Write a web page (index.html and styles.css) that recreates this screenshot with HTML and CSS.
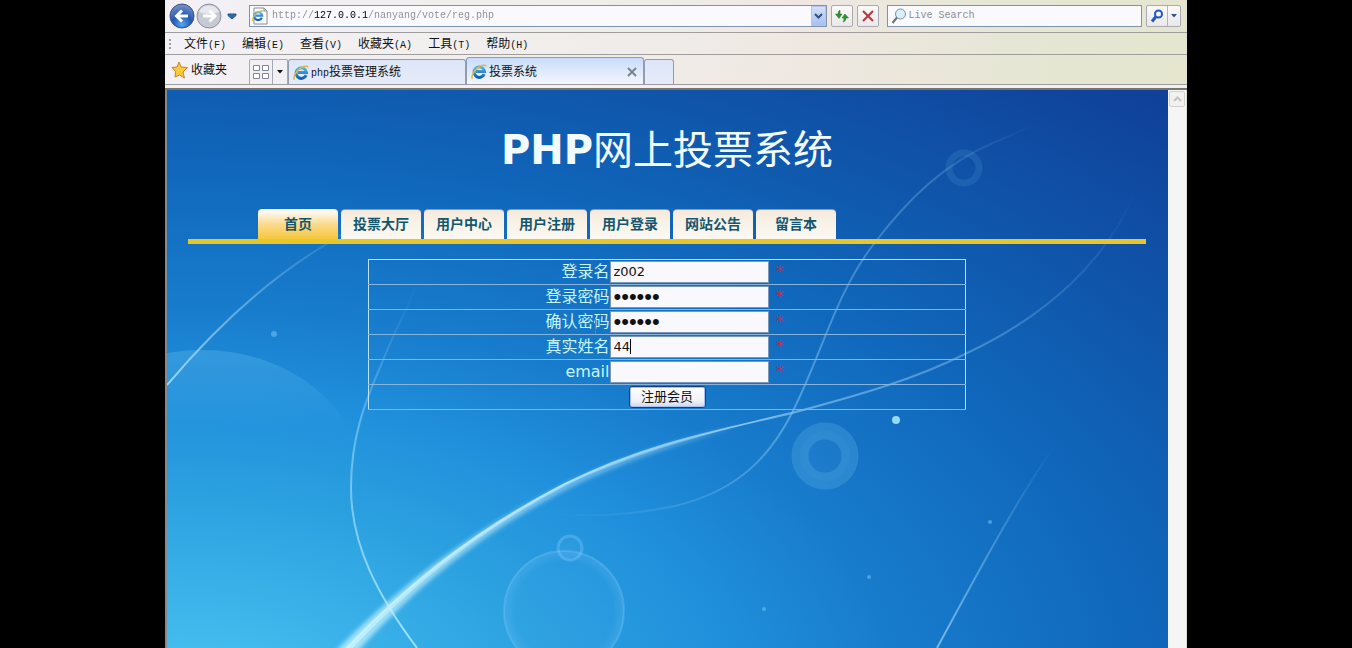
FILE: index.html
```html
<!DOCTYPE html>
<html lang="zh-CN">
<head>
<meta charset="utf-8">
<title>投票系统</title>
<link rel="stylesheet" href="styles.css">
</head>
<body>
<svg class="defs" aria-hidden="true">
  <defs>
    <linearGradient id="ieBlue" x1="0" y1="0" x2="0" y2="1"><stop offset="0" stop-color="#54b4ec"/><stop offset="1" stop-color="#1260b4"/></linearGradient>
    <symbol id="ie" viewBox="0 0 16 16">
      <path d="M13.2 10.2A5.3 5.3 0 1 1 13.6 7.6H5" fill="none" stroke="url(#ieBlue)" stroke-width="3"/>
      <path d="M1.5 14.8C-.5 12 3.500 5.500 8 3C11 1 15 .3 15 2.600" fill="none" stroke="#e2b83c" stroke-width="1.500"/>
    </symbol>
    <symbol id="down" viewBox="0 0 6 4"><path d="M0 0h6L3 3.500z" fill="currentColor"/></symbol>
  </defs>
</svg>
<div class="browser">
  <header class="chrome">
    <div class="row address-row">
      <div class="history">
        <button class="bare" aria-label="后退"><svg width="26" height="28" viewBox="0 0 26 28">
          <defs><radialGradient id="back" cx=".5" cy=".85" r=".8"><stop offset="0" stop-color="#55a8ec"/><stop offset=".5" stop-color="#2358b4"/><stop offset="1" stop-color="#7490c8"/></radialGradient></defs>
          <circle cx="13" cy="14" r="12" fill="url(#back)" stroke="#3c4c78"/><path d="M19 14H8M13 8.500L7.500 14l5.500 5.500" fill="none" stroke="#fff" stroke-width="3"/></svg></button>
        <button class="bare" aria-label="前进"><svg width="28" height="28" viewBox="0 0 28 28">
          <circle cx="14" cy="14" r="12" fill="#c6cad4" stroke="#8c909c"/><path d="M4 10A11 11 0 0 1 24 10Q14 14 4 10" fill="#e6e8ee"/><path d="M8 14H19M14.500 8.500L20 14l-5.500 5.500" fill="none" stroke="#fff" stroke-width="3"/></svg></button>
        <button class="bare recent" aria-label="最近的页面"><svg width="10" height="7" viewBox="0 0 10 7"><path d="M1 1h8v1.500L5 6 1 2.500z" fill="#2c6cae" stroke="#24507e"/></svg></button>
      </div>
      <div class="field url">
        <svg width="17" height="18" viewBox="0 0 17 18"><path d="M2 1h10l3 3v13H2z" fill="#fff" stroke="#868a94"/><path d="M12 1v3h3" fill="none" stroke="#868a94"/><use href="#ie" x="0" y="3" width="12" height="12"/></svg>
        <input type="text" aria-label="地址" value="http://127.0.0.1/nanyang/vote/reg.php">
        <button class="drop" aria-label="显示地址"><svg width="9" height="7" viewBox="0 0 9 7"><path d="M1 1l3.500 3.500L8 1" fill="none" stroke="#2f4f86" stroke-width="2"/></svg></button>
      </div>
      <button class="tool" aria-label="刷新"><svg width="16" height="16" viewBox="0 0 16 16"><path d="M6 2Q4 3 4 6H1.500L5 10.500 8 6H6zM11 6l3.500 4H12q0 3-3 4 1-1 1-4H8z" fill="#2c962c" stroke="#24742c" stroke-width=".5"/></svg></button>
      <button class="tool" aria-label="停止"><svg width="14" height="14" viewBox="0 0 14 14"><path d="M2 2l10 10M12 2L2 12" stroke="#b63440" stroke-width="2"/></svg></button>
      <div class="field search">
        <svg width="16" height="18" viewBox="0 0 16 18"><circle cx="9.500" cy="7" r="5" fill="#d8f0fa" stroke="#7c90a4"/><path d="M6 10.500L1.500 16" stroke="#6c7078" stroke-width="2"/></svg>
        <input type="text" aria-label="搜索" placeholder="Live Search">
      </div>
      <div class="split">
        <button aria-label="搜索"><svg width="14" height="14" viewBox="0 0 14 14"><circle cx="8.500" cy="5" r="3.500" fill="none" stroke="#2458c4" stroke-width="2"/><path d="M6 7.500L2 12.500" stroke="#2458c4" stroke-width="3"/></svg></button>
        <button class="arrow" aria-label="搜索选项"><svg width="6" height="4"><use href="#down"/></svg></button>
      </div>
    </div>
    <nav class="row menu-row" aria-label="菜单">
      <svg class="grip" width="3" height="14" viewBox="0 0 3 14"><path d="M1 1v2M1 5v2M1 9v2" stroke="#a0a0a0" stroke-width="2"/></svg>
      <button class="bare">文件<span class="key">(F)</span></button>
      <button class="bare">编辑<span class="key">(E)</span></button>
      <button class="bare">查看<span class="key">(V)</span></button>
      <button class="bare">收藏夹<span class="key">(A)</span></button>
      <button class="bare">工具<span class="key">(T)</span></button>
      <button class="bare">帮助<span class="key">(H)</span></button>
    </nav>
    <div class="row tab-row">
      <button class="bare favorites"><svg width="18" height="18" viewBox="0 0 18 18"><path d="M8 1l2.200 5 6.300.5-4.500 4.500 1.500 6L8.500 14 4 16l.5-5.500L1 6.500l5-.5z" fill="#fcc83c" stroke="#c4842c"/></svg>收藏夹</button>
      <div class="quick">
        <button class="grid" aria-label="快速导航选项卡"><svg width="16" height="14" viewBox="0 0 16 14"><path d="M.5.5h6v5h-6zM9.500.5h6v5h-6zM.5 8.500h6v5h-6zM9.500 8.500h6v5h-6z" fill="#fff" stroke="#7c8698"/></svg></button>
        <button class="arrow" aria-label="选项卡列表"><svg width="6" height="4"><use href="#down"/></svg></button>
      </div>
      <div class="tab"><svg width="16" height="16"><use href="#ie"/></svg><span><span class="key">php</span>投票管理系统</span></div>
      <div class="tab current"><svg width="16" height="16"><use href="#ie"/></svg><span>投票系统</span><button class="bare close" aria-label="关闭选项卡"><svg width="10" height="10" viewBox="0 0 10 10"><path d="M1 1l8 8M9 1L1 9" stroke="#7c828e" stroke-width="2"/></svg></button></div>
      <button class="tab new" aria-label="新选项卡"></button>
    </div>
  </header>
  <div class="viewport">
    <main class="page">
      <svg class="wallpaper" viewBox="0 0 1001 558" preserveAspectRatio="xMidYMid slice" aria-hidden="true">
        <defs>
          <radialGradient id="sky" gradientUnits="userSpaceOnUse" cx="0" cy="0" r="1.500" gradientTransform="translate(10 620) scale(1001 560)">
            <stop offset="0" stop-color="#4cc6f2"/><stop offset=".13" stop-color="#3cb4ea"/><stop offset=".26" stop-color="#2ba0e0"/><stop offset=".37" stop-color="#2090dc"/><stop offset=".48" stop-color="#187ccc"/><stop offset=".64" stop-color="#1068bc"/><stop offset=".8" stop-color="#0f55aa"/><stop offset="1" stop-color="#103e97"/>
          </radialGradient>
          <linearGradient id="beam" gradientUnits="userSpaceOnUse" x1="180" y1="558" x2="968" y2="102"><stop offset="0" stop-color="#d4f6ff" stop-opacity=".95"/><stop offset=".45" stop-color="#a0d8f8" stop-opacity=".7"/><stop offset=".75" stop-color="#80b8e8" stop-opacity=".5"/><stop offset="1" stop-color="#80b8e8" stop-opacity="0"/></linearGradient>
          <linearGradient id="glow" gradientUnits="userSpaceOnUse" x1="180" y1="558" x2="640" y2="318"><stop offset="0" stop-color="#c8f4ff" stop-opacity=".75"/><stop offset="1" stop-color="#a0d8f8" stop-opacity=".4"/></linearGradient>
          <linearGradient id="arc" gradientUnits="userSpaceOnUse" x1="0" y1="295" x2="220" y2="114"><stop offset="0" stop-color="#b0e4ff" stop-opacity=".8"/><stop offset="1" stop-color="#80b8e8" stop-opacity="0"/></linearGradient>
          <linearGradient id="rise" gradientUnits="userSpaceOnUse" x1="0" y1="558" x2="0" y2="190"><stop offset="0" stop-color="#b0ecff" stop-opacity=".85"/><stop offset=".6" stop-color="#a0dcff" stop-opacity=".5"/><stop offset="1" stop-color="#80b8e8" stop-opacity="0"/></linearGradient>
          <linearGradient id="ray" gradientUnits="userSpaceOnUse" x1="770" y1="558" x2="888" y2="355"><stop offset="0" stop-color="#90ccf4" stop-opacity=".8"/><stop offset="1" stop-color="#80b8e8" stop-opacity="0"/></linearGradient>
          <linearGradient id="swirl" gradientUnits="userSpaceOnUse" x1="380" y1="425" x2="868" y2="34"><stop offset="0" stop-color="#90ccf8" stop-opacity="0"/><stop offset=".4" stop-color="#90ccf8" stop-opacity=".5"/><stop offset=".8" stop-color="#80b8e8" stop-opacity=".35"/><stop offset="1" stop-color="#80b8e8" stop-opacity="0"/></linearGradient>
          <linearGradient id="haze" x1="0" y1="0" x2="0" y2="1"><stop offset="0" stop-color="#70c4f0" stop-opacity=".3"/><stop offset=".3" stop-color="#70c4f0" stop-opacity="0"/></linearGradient>
          <radialGradient id="bubble"><stop offset=".82" stop-color="#90d0ff" stop-opacity=".03"/><stop offset="1" stop-color="#90d0ff" stop-opacity=".2"/></radialGradient>
          <filter id="soft" x="-10%" y="-10%" width="120%" height="120%"><feGaussianBlur stdDeviation="2"/></filter>
        </defs>
        <rect width="1001" height="558" fill="url(#sky)"/>
        <ellipse cx="35" cy="390" rx="160" ry="130" fill="url(#haze)"/>
        <path d="M0 295Q78 203 158 155Q205 125 251 94" fill="none" stroke="url(#arc)" stroke-width="2"/>
        <path d="M248 198C238 224 226 244 215 273C196 316 184 350 184 398C184 455 211 506 250 558" fill="none" stroke="url(#rise)" stroke-width="2"/>
        <path d="M176 562C240 494 310 440 398 394C480 353 550 341 625 323C700 303 750 288 798 264C880 226 940 170 968 102" fill="none" stroke="url(#beam)" stroke-width="2"/>
        <path d="M168 562C240 488 310 438 398 394C460 364 520 348 570 336C520 352 460 369 400 399C310 446 250 496 190 562z" fill="url(#glow)" filter="url(#soft)"/>
        <path d="M176 562C240 492 310 438 398 393C480 354 550 341 640 318C550 343 480 357 400 395C310 442 245 495 182 562z" fill="url(#glow)"/>
        <path d="M381 423Q440 430 508 416C575 400 605 362 625 323C655 264 668 205 706 155C742 107 780 72 828 52Q850 43 868 34" fill="none" stroke="url(#swirl)" stroke-width="2"/>
        <path d="M888 355C850 410 820 466 770 558" fill="none" stroke="url(#ray)" stroke-width="2"/>
        <circle cx="397" cy="521" r="60" fill="url(#bubble)" stroke="#80c8f8" stroke-opacity=".3" stroke-width="2"/>
        <circle cx="403" cy="458" r="12" fill="#90d0ff" fill-opacity=".08" stroke="#90d0ff" stroke-opacity=".3" stroke-width="3"/>
        <circle cx="658" cy="366" r="25" fill="#60b8e8" fill-opacity=".08" stroke="#60b8e8" stroke-opacity=".28" stroke-width="17"/>
        <circle cx="797" cy="78" r="15" fill="none" stroke="#50a0d8" stroke-opacity=".2" stroke-width="7"/>
        <circle cx="729" cy="330" r="4" fill="#a4e4ff" opacity=".9"/>
        <g fill="#80c8f8" opacity=".5"><circle cx="107" cy="244" r="3"/><circle cx="823" cy="432" r="2"/><circle cx="702" cy="487" r="2"/><circle cx="597" cy="519" r="2"/></g>
      </svg>
      <h1 class="title">PHP<span class="title-cn">网上投票系统</span></h1>
      <nav class="site-nav" aria-label="网站导航">
        <a class="active" href="#">首页</a>
        <a href="#">投票大厅</a>
        <a href="#">用户中心</a>
        <a href="#">用户注册</a>
        <a href="#">用户登录</a>
        <a href="#">网站公告</a>
        <a href="#">留言本</a>
      </nav>
      <form class="register">
        <table>
          <tr><th><label for="login">登录名</label></th><td><input id="login" type="text" value="z002"><span class="required">*</span></td></tr>
          <tr><th><label for="pass">登录密码</label></th><td><input id="pass" type="password" value="123456"><span class="required">*</span></td></tr>
          <tr><th><label for="again">确认密码</label><span class="pointer"></span></th><td><input id="again" type="password" value="123456"><span class="required">*</span></td></tr>
          <tr><th><label for="name">真实姓名</label></th><td><input id="name" type="text" value="44"><span class="caret"></span><span class="required">*</span></td></tr>
          <tr><th><label for="email">email</label></th><td><input id="email" type="text"><span class="required">*</span></td></tr>
          <tr><td class="actions" colspan="2"><button type="button">注册会员</button></td></tr>
        </table>
      </form>
    </main>
    <div class="scrollbar"><button aria-label="向上滚动"><svg width="9" height="6" viewBox="0 0 9 6"><path d="M1 5l3.500-3.500L8 5" fill="none" stroke="#c4c2be" stroke-width="2"/></svg></button></div>
  </div>
</div>
</body>
</html>
```
FILE: styles.css
```css
* { box-sizing: border-box; }
body {
  margin: 0;
  background: #000;
  font: 12px/16px "Liberation Sans", "Noto Sans CJK SC", sans-serif;
  color: #111;
}
button, input { font: inherit; color: inherit; }
button { padding: 0; }
svg { display: block; flex: none; }
.defs { position: absolute; width: 0; height: 0; }
.bare { border: 0; background: none; white-space: nowrap; }
.key { font-family: "Liberation Mono", monospace; font-size: 10px; }

.browser {
  display: flex;
  flex-direction: column;
  min-height: 100vh;
  margin: 0 165px;
  background: #f4f2f4;
}
.chrome {
  background: linear-gradient(100deg, #f3f1f6 0%, #f0ede9 45%, #efe8e2 62%, #e5e6d3 85%, #e6e6cf 100%);
  border-bottom: 2px solid #77756c;
}
.row { display: flex; align-items: center; border-bottom: 1px solid #a09e9c; }

.address-row { height: 33px; gap: 4px; padding: 0 6px 0 4px; }
.history { display: flex; align-items: center; width: 76px; }
.recent { margin-left: 4px; }
.field {
  display: flex;
  align-items: center;
  height: 22px;
  border: 1px solid #7f92ac;
  background: #faf9fd;
}
.field input {
  flex: 1;
  min-width: 0;
  padding: 0;
  border: 0;
  outline: 0;
  background: none;
  font: 10px/16px "Liberation Mono", monospace;
}
.url { flex: 584 1 0; padding-left: 2px; }
.url input {
  margin-left: 3px;
  background: linear-gradient(90deg, #8c8c90 42px, #000 42px 96px, #8c8c90 96px) text;
  -webkit-text-fill-color: transparent;
}
.search { flex: 255 1 0; margin-left: 4px; padding-left: 3px; }
.search input { margin-left: 2px; }
.search input::placeholder { color: #8c8c90; opacity: 1; }
.drop {
  display: grid;
  place-items: center;
  width: 15px;
  height: 20px;
  border: 1px solid #b4c6ee;
  background: linear-gradient(#d4e0fa, #a9c0f0);
}
.tool, .split {
  display: flex;
  align-items: center;
  justify-content: center;
  height: 22px;
  border: 1px solid #a9aab6;
  border-radius: 2px;
  background: linear-gradient(#fbf9f8, #ebe8ea);
}
.tool { width: 22px; }
.split button, .quick button {
  display: grid;
  place-items: center;
  height: 100%;
  border: 0;
  background: none;
}
.split button { width: 20px; }
.split .arrow { width: 13px; border-left: 1px solid #a9b4d0; color: #2c5494; }

.menu-row { height: 22px; gap: 16px; padding: 2px 0 0 4px; }
.grip { margin-right: -4px; }

.tab-row { height: 30px; align-items: flex-end; padding-left: 6px; }
.favorites { display: flex; align-items: center; gap: 2px; width: 78px; height: 29px; }
.quick {
  display: flex;
  width: 39px;
  height: 25px;
  border: 1px solid #a1a8b8;
  border-bottom: 0;
  border-radius: 2px 2px 0 0;
}
.quick .grid { width: 22px; }
.quick .arrow { flex: 1; border-left: 1px solid #a1a8b8; color: #111; }
.tab {
  display: flex;
  align-items: center;
  gap: 2px;
  flex: 0 1 178px;
  height: 25px;
  padding: 2px 6px 0 4px;
  border: 1px solid #8f9cb4;
  border-bottom: 0;
  border-radius: 3px 3px 0 0;
  background: linear-gradient(#dde6f8, #e6ebfa);
  white-space: nowrap;
}
.current { height: 27px; background: linear-gradient(#c8dcfa, #e2ecfd 60%, #f4f5fd); }
.close { margin-left: auto; }
.new { flex-basis: 30px; }
.chrome::after { content: ""; display: block; height: 3px; background: #f3eff2; }

.viewport { display: flex; flex: 1; border-left: 2px solid #8a8884; }
.page {
  position: relative;
  isolation: isolate;
  flex: 1;
  min-width: 0;
  overflow: hidden;
  padding: 36px 22px 0 21px;
  background: #1a82d0;
}
.wallpaper { position: absolute; inset: 0; z-index: -1; width: 100%; height: 100%; }
.scrollbar { width: 19px; padding: 1px 2px 0 1px; background: #f6f5f6; border-right: 1px solid #dedcd6; }
.scrollbar button {
  display: grid;
  place-items: center;
  width: 16px;
  height: 16px;
  border: 1px solid #d4d2cc;
  border-radius: 2px;
  background: #f3f1ee;
}

.title {
  margin: 0 0 35px;
  text-align: center;
  color: #f2fbff;
  font: bold 40px/48px "DejaVu Sans", "Noto Sans CJK SC", sans-serif;
}
.title-cn { font-weight: 400; }

.site-nav {
  display: flex;
  gap: 3px;
  padding-left: 70px;
  border-bottom: 5px solid #e9c628;
}
.site-nav a {
  flex: 0 1 80px;
  height: 30px;
  border-top: 1px solid #b08c9c;
  border-radius: 4px 4px 0 0;
  background: linear-gradient(#f6e9dc, #f8f3e8 50%, #fbf8f2);
  color: #14566e;
  font: bold 14px/28px "Liberation Sans", "Noto Sans CJK SC", sans-serif;
  text-align: center;
  text-decoration: none;
  white-space: nowrap;
}
.site-nav .active { border-color: #fbeed8; background: linear-gradient(#fdf6ea 10%, #fbd98c 50%, #f6c83c); }

.register { width: 598px; max-width: 100%; margin: 15px auto 0; }
.register table { width: 100%; border-collapse: collapse; border: 1px solid #b9e2f2; }
.register tr { height: 25px; border-bottom: 1px solid #86b4da; }
.register th, .register td { position: relative; padding: 0; vertical-align: middle; }
.register th {
  width: 241px;
  text-align: right;
  color: #c8f6fc;
  font: 16px/22px "DejaVu Sans", "Noto Sans CJK SC", sans-serif;
}
.register td { font: 13px/22px "DejaVu Sans", "Noto Sans CJK SC", sans-serif; }
.register input {
  width: 159px;
  height: 22px;
  padding: 0 3px;
  border: 1px solid #7798bc;
  background: #f8f8fd;
  vertical-align: middle;
}
.register input[type="password"] { font: 22px/20px "Liberation Sans", sans-serif; }
.required { margin-left: 7px; color: #c8284c; font-size: 16px; vertical-align: middle; }
.caret { position: absolute; left: 20px; top: 4px; width: 1px; height: 15px; background: #000; }
.pointer { position: absolute; right: 14px; top: 9px; width: 1px; height: 15px; background: #6c7c9c; }
.register .actions { text-align: center; }
.actions button {
  width: 77px;
  height: 22px;
  border: 1px solid #123f82;
  border-radius: 3px;
  background: linear-gradient(#fff, #f0f0f8 70%, #cfd4e8);
  box-shadow: inset 0 0 0 1px #a9c2ee;
  color: #111;
  font: 13px/16px "Liberation Sans", "Noto Sans CJK SC", sans-serif;
  vertical-align: middle;
}
```
